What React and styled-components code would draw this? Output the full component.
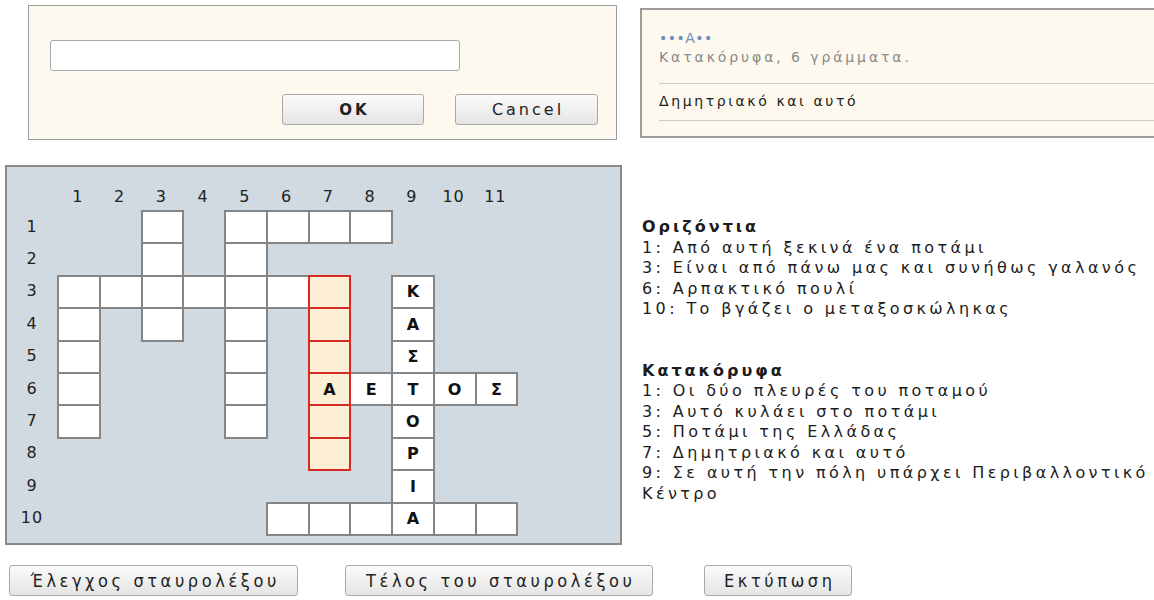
import React from 'react';
import styled, { createGlobalStyle } from 'styled-components';

const GlobalStyle = createGlobalStyle`
	html, body {
		margin: 0;
		padding: 0;
		background: #ffffff;
		overflow: hidden;
	}
	body {
		font-family: 'DejaVu Sans', Verdana, sans-serif;
		color: #1c1c1c;
	}
`;

const Page = styled.div`
	width: 1154px;
	height: 600px;
	display: flex;
	flex-direction: column;
`;

const TopRow = styled.div`
	display: flex;
	align-items: flex-start;
	padding-top: 5px;
`;

const PromptBox = styled.div`
	flex-shrink: 0;
	margin-left: 28px;
	width: 589px;
	height: 135px;
	box-sizing: border-box;
	background: #fdf9ef;
	border: 1px solid #9c9c9c;
	padding: 34px 18px 0 21px;
	display: flex;
	flex-direction: column;
`;

const AnswerInput = styled.input`
	width: 410px;
	height: 31px;
	box-sizing: border-box;
	border: 1px solid #a8a8a8;
	border-radius: 3px;
	background: #ffffff;
	outline: none;
`;

const PromptActions = styled.div`
	display: flex;
	justify-content: flex-end;
	gap: 31px;
	margin-top: 23px;
`;

const Button = styled.button`
	width: ${(props) => props.w}px;
	height: 31px;
	box-sizing: border-box;
	border: 1px solid #a9a9a9;
	border-radius: 3px;
	background: linear-gradient(#fbfbfb, #e4e4e4);
	font-family: 'DejaVu Sans', Verdana, sans-serif;
	font-size: ${(props) => (props.bold ? 15 : 16)}px;
	font-weight: ${(props) => (props.bold ? 700 : 400)};
	letter-spacing: 3px;
	padding: 0 0 0 3px;
	color: #222;
	cursor: pointer;
`;

const HintBox = styled.div`
	flex-shrink: 0;
	margin: 3px 0 0 23px;
	width: 540px;
	height: 130px;
	box-sizing: border-box;
	background: #fdf9ef;
	border: 2px solid #9c9c9c;
	padding: 19px 0 0 17px;
`;

const Pattern = styled.div`
	font-size: 14px;
	line-height: 18px;
	color: #6d8cbf;
	letter-spacing: 0.5px;
`;

const HintMeta = styled.div`
	font-size: 14px;
	line-height: 20px;
	color: #8a8a8a;
	letter-spacing: 2.9px;
	padding-bottom: 16px;
	border-bottom: 1px solid #cfcac0;
`;

const HintText = styled.div`
	font-size: 14px;
	line-height: 20px;
	color: #1c1c1c;
	letter-spacing: 2.6px;
	padding: 7px 0 9px;
	border-bottom: 1px solid #cfcac0;
`;

const MiddleRow = styled.div`
	display: flex;
	align-items: flex-start;
	margin-top: 25px;
`;

const Board = styled.div`
	flex-shrink: 0;
	margin-left: 5px;
	width: 617px;
	height: 380px;
	box-sizing: border-box;
	background: #d1d9e1;
	border: 2px solid #8a8a8a;
	padding-top: 15px;
`;

const Grid = styled.div`
	display: grid;
	grid-template-columns: 50px repeat(11, 41.75px);
	grid-template-rows: 28px repeat(10, 32.4px);
`;

const Label = styled.div`
	display: flex;
	align-items: center;
	justify-content: center;
	font-size: 16px;
	color: #222;
	letter-spacing: 1px;
`;

const Cell = styled.div`
	grid-column: ${(props) => props.col + 1};
	grid-row: ${(props) => props.row + 1};
	margin: 0 -2px -2px 0;
	border: 2px solid ${(props) => (props.active ? '#d62a24' : '#858585')};
	background: ${(props) => (props.active ? '#fdeed6' : '#ffffff')};
	z-index: ${(props) => (props.active ? 1 : 0)};
	display: flex;
	align-items: center;
	justify-content: center;
	font-size: 16px;
	font-weight: 700;
	color: #111;
`;

const Clues = styled.div`
	margin-left: 20px;
	padding-top: 52px;
	font-size: 16px;
	line-height: 20.5px;
	letter-spacing: 3.4px;
	color: #1c1c1c;
`;

const ClueHeading = styled.div`
	font-weight: 700;
	letter-spacing: 3px;
	margin-top: ${(props) => (props.gap ? 41 : 0)}px;
`;

const ButtonRow = styled.div`
	display: flex;
	align-items: center;
	margin-top: 20px;
`;

const FooterButton = styled(Button)`
	margin-left: ${(props) => props.ml}px;
	font-family: 'DejaVu Sans Condensed', 'DejaVu Sans', sans-serif;
	font-size: 18px;
	letter-spacing: 3.6px;
	padding-left: 3.6px;
`;

// ' ' = no cell, '#' = empty square, anything else is a filled-in letter
const LAYOUT = [
	'  # ####   ',
	'  # #      ',
	'####### Κ  ',
	'# # # # Α  ',
	'#   # # Σ  ',
	'#   # ΑΕΤΟΣ',
	'#   # # Ο  ',
	'      # Ρ  ',
	'        Ι  ',
	'     ###Α##',
];

// the word being answered: column 7, rows 3-8
const ACTIVE = { col: 7, from: 3, to: 8 };

const ACROSS = [
	'1: Από αυτή ξεκινά ένα ποτάμι',
	'3: Είναι από πάνω μας και συνήθως γαλανός',
	'6: Αρπακτικό πουλί',
	'10:  Το βγάζει ο μεταξοσκώληκας',
];

const DOWN = [
	'1: Οι δύο πλευρές του ποταμού',
	'3: Αυτό κυλάει στο ποτάμι',
	'5: Ποτάμι της Ελλάδας',
	'7: Δημητριακό και αυτό',
	'9: Σε αυτή την πόλη υπάρχει Περιβαλλοντικό Κέντρο',
];

const Crossword = () => {
	const cells = [];
	LAYOUT.forEach((line, r) => {
		[...line].forEach((ch, c) => {
			if (ch === ' ') return;
			const row = r + 1;
			const col = c + 1;
			const active = col === ACTIVE.col && row >= ACTIVE.from && row <= ACTIVE.to;
			cells.push(
				<Cell key={`${row}-${col}`} row={row} col={col} active={active}>
					{ch === '#' ? '' : ch}
				</Cell>
			);
		});
	});

	return (
		<Grid>
			<Label />
			{Array.from({ length: 11 }, (_, i) => (
				<Label key={`c${i}`} style={{ gridRow: 1, gridColumn: i + 2 }}>
					{i + 1}
				</Label>
			))}
			{Array.from({ length: 10 }, (_, i) => (
				<Label key={`r${i}`} style={{ gridRow: i + 2, gridColumn: 1 }}>
					{i + 1}
				</Label>
			))}
			{cells}
		</Grid>
	);
};

const App = () => {
	return (
		<Page>
			<GlobalStyle />
			<TopRow>
				<PromptBox>
					<AnswerInput type="text" />
					<PromptActions>
						<Button w={142} bold>
							OK
						</Button>
						<Button w={143}>Cancel</Button>
					</PromptActions>
				</PromptBox>
				<HintBox>
					<Pattern>•••Α••</Pattern>
					<HintMeta>Κατακόρυφα, 6 γράμματα.</HintMeta>
					<HintText>Δημητριακό και αυτό</HintText>
				</HintBox>
			</TopRow>
			<MiddleRow>
				<Board>
					<Crossword />
				</Board>
				<Clues>
					<ClueHeading>Οριζόντια</ClueHeading>
					{ACROSS.map((c) => (
						<div key={c}>{c}</div>
					))}
					<ClueHeading gap>Κατακόρυφα</ClueHeading>
					{DOWN.map((c) => (
						<div key={c}>{c}</div>
					))}
				</Clues>
			</MiddleRow>
			<ButtonRow>
				<FooterButton w={289} ml={9}>
					Έλεγχος σταυρολέξου
				</FooterButton>
				<FooterButton w={308} ml={47}>
					Τέλος του σταυρολέξου
				</FooterButton>
				<FooterButton w={148} ml={51}>
					Εκτύπωση
				</FooterButton>
			</ButtonRow>
		</Page>
	);
};

export default App;
